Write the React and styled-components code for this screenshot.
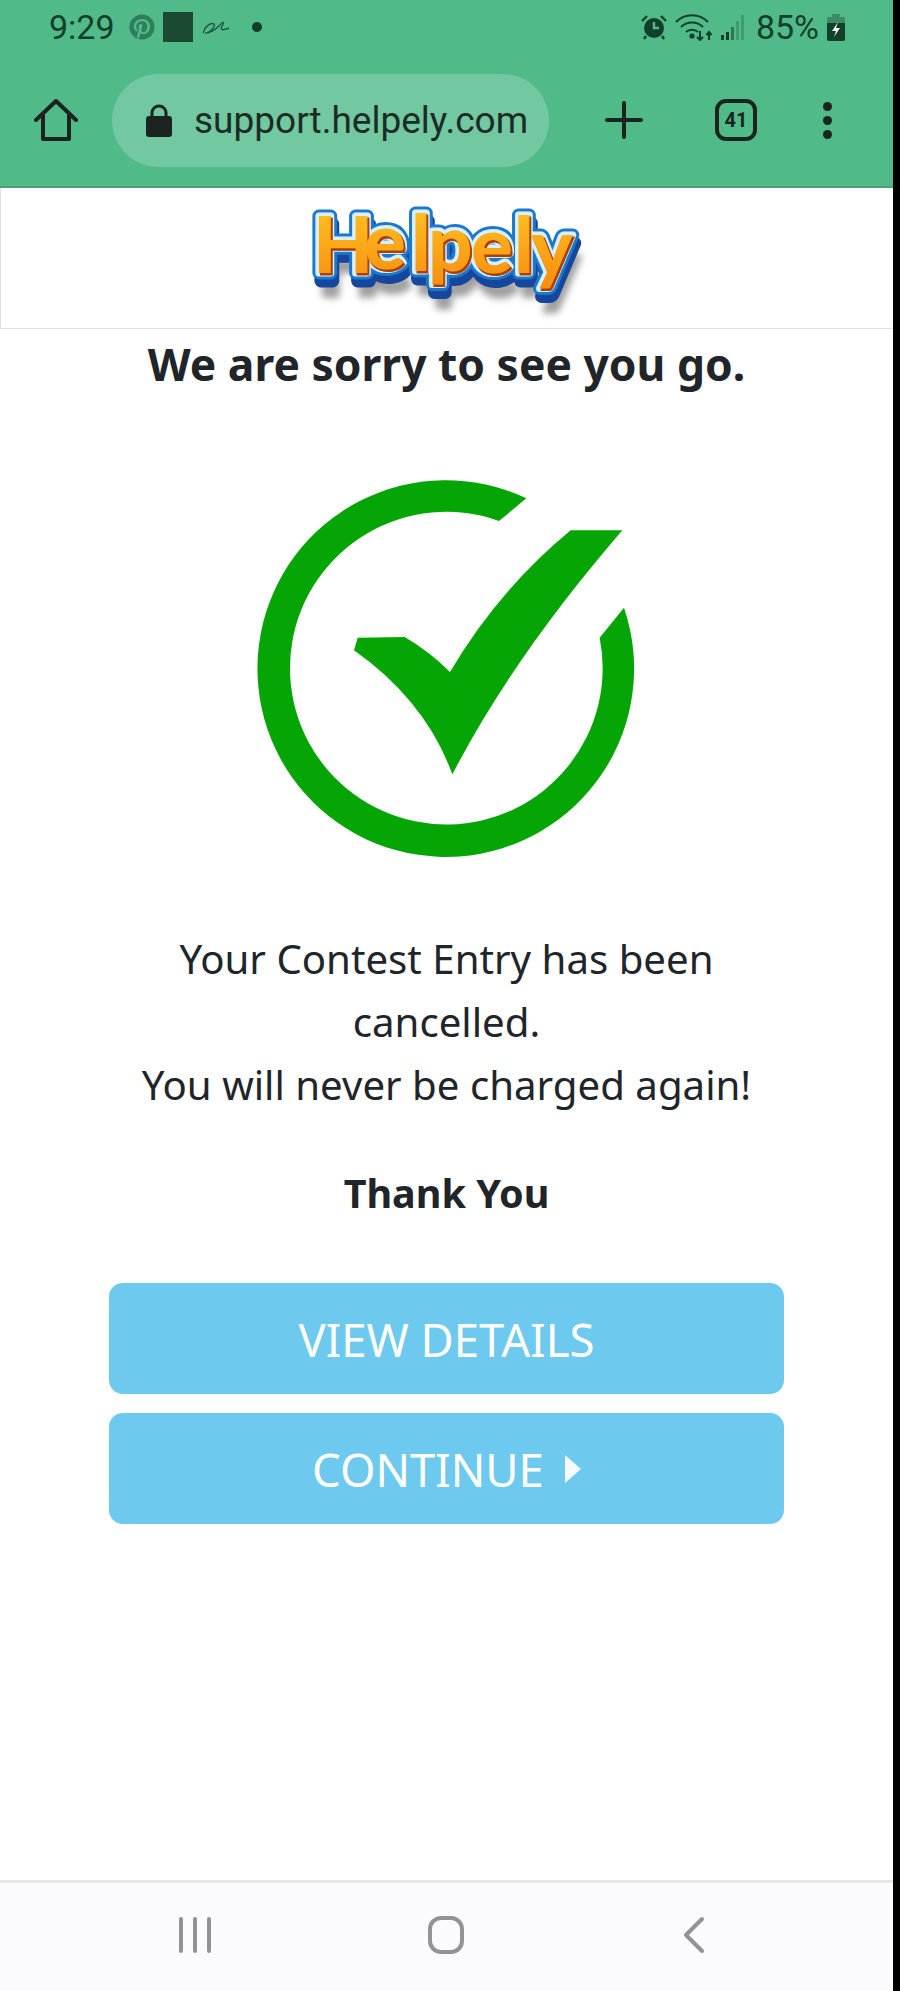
import React from 'react'
import styled, { createGlobalStyle } from 'styled-components'
import { FaPinterest } from 'react-icons/fa'

const GlobalStyle = createGlobalStyle`
    html, body {
        margin: 0;
        padding: 0;
        background: #000;
    }
    * { box-sizing: border-box; }
`

const Logo = () => (
    <LogoSvg viewBox="0 -12 290 137" role="img" aria-label="Helpely">
        <defs>
            <linearGradient id="logoFill" x1="0" y1="0" x2="0" y2="1">
                <stop offset="0" stopColor="#ffcb22" />
                <stop offset="1" stopColor="#f88a10" />
            </linearGradient>
            <filter id="logoBlur"><feGaussianBlur stdDeviation="3.5" /></filter>
        </defs>
        {/* the layers under the word all reuse the one text below */}
        <use href="#logoWord" transform="translate(6 22)" fill="#777" stroke="#777" strokeWidth="6" filter="url(#logoBlur)" opacity="0.7" />
        <use href="#logoWord" transform="translate(2 8)" fill="#17479c" stroke="#17479c" strokeWidth="13" />
        <use href="#logoWord" fill="#1c78cc" stroke="#1c78cc" strokeWidth="13" />
        <use href="#logoWord" fill="#d8f0fc" stroke="#d8f0fc" strokeWidth="7" />
        <use href="#logoWord" transform="translate(1.5 1.5)" fill="#a8410c" stroke="#a8410c" strokeWidth="1" />
        <g fill="url(#logoFill)">
            <LogoText id="logoWord" x="6 57 104 121 164 207 224" y="70 66 68 68 70 70 72">Helpely</LogoText>
        </g>
    </LogoSvg>
)

const CheckMark = () => (
    <CheckSvg viewBox="0 0 1260 1230">
        <path fill="#06a506" d="M862 112 A565 565 0 1 0 1155 440 L1082 530 A469 469 0 1 1 780 180 Z" />
        <path fill="#06a506" d="M356 530 L497 528 Q570 570 633 633 Q780 385 995 208 L1150 208 C960 430 780 670 640 940 Q560 720 345 568 Z" />
    </CheckSvg>
)

const App = () => {
    return (
        <Wrapper>
            <GlobalStyle />
            <Screen>
                <BrowserChrome>
                    <StatusBar>
                        <StatusLeft>
                            <Time>9:29</Time>
                            <PinIcon><FaPinterest size={26} /></PinIcon>
                            <DarkSquare />
                            <svg width="28" height="16" viewBox="0 0 28 16" fill="none" stroke="#1d5a3e" strokeWidth="1.4">
                                <path d="M1 14 C3 7 9 3 12 5 C14 8 6 15 3 14 C7 15 14 10 18 6 C21 2 23 3 20 7 C18 11 20 12 27 9" />
                            </svg>
                            <Dot />
                        </StatusLeft>
                        <StatusRight>
                            <svg width="26" height="26" viewBox="0 0 26 26">
                                <circle cx="13" cy="14" r="10" fill="#123f2b" />
                                <path d="M13 8 V14 H18" stroke="#50ba88" strokeWidth="2.4" fill="none" />
                                <path d="M1 7 L6 2 M25 7 L20 2 M5 22 L3 25 M21 22 L23 25" stroke="#123f2b" strokeWidth="2.4" />
                            </svg>
                            <svg width="38" height="28" viewBox="0 0 38 28" fill="none" stroke="#123f2b" strokeWidth="2">
                                <path d="M1 9 C10 0 24 0 33 9" />
                                <path d="M6 14 C12 8 22 8 28 14" />
                                <path d="M11 19 C14 16 20 16 23 19" />
                                <circle cx="17" cy="23" r="1.6" fill="#123f2b" />
                                <path d="M25 18 V27 M22 24 L25 27 L28 24 M34 27 V19 M31.5 22 L34 19 L36.5 22" />
                            </svg>
                            <svg width="24" height="26" viewBox="0 0 24 26">
                                <rect x="0" y="21" width="3" height="5" fill="#123f2b" />
                                <rect x="5" y="18" width="3" height="8" fill="#123f2b" />
                                <rect x="10" y="13" width="3" height="13" fill="#123f2b" opacity="0.55" />
                                <rect x="15" y="7" width="3" height="19" fill="#123f2b" opacity="0.25" />
                                <rect x="20" y="1" width="3" height="25" fill="#123f2b" opacity="0.25" />
                            </svg>
                            <Percent>85%</Percent>
                            <svg width="18" height="27" viewBox="0 0 18 27">
                                <path d="M5 0 H13 V3 H17 Q18 3 18 5 V25 Q18 27 16 27 H2 Q0 27 0 25 V5 Q0 3 1 3 H5 Z" fill="#3f8a66" />
                                <path d="M0 9 H18 V25 Q18 27 16 27 H2 Q0 27 0 25 Z" fill="#123f2b" />
                                <path d="M11 8 L5 17 H9 L7 23 L13 14 H9 Z" fill="#eaf6f0" />
                            </svg>
                        </StatusRight>
                    </StatusBar>
                    <Toolbar>
                        <svg width="44" height="44" viewBox="0 0 44 44" fill="none" stroke="#1b2420" strokeWidth="4" strokeLinejoin="round" strokeLinecap="round">
                            <path d="M2 22 L22 3 L42 22 M9 17 V41 H35 V17" />
                        </svg>
                        <UrlPill>
                            <svg width="26" height="34" viewBox="0 0 26 34">
                                <path d="M6 14 V10 A7 7 0 0 1 20 10 V14" fill="none" stroke="#1b2420" strokeWidth="3" />
                                <rect x="0" y="13" width="26" height="21" rx="3" fill="#1b2420" />
                            </svg>
                            <UrlText>support.helpely.com</UrlText>
                        </UrlPill>
                        <ToolActions>
                            <svg width="38" height="38" viewBox="0 0 38 38" stroke="#1b2420" strokeWidth="4" strokeLinecap="round">
                                <path d="M19 2 V36 M2 19 H36" />
                            </svg>
                            <TabCount>41</TabCount>
                            <MenuDots><i /><i /><i /></MenuDots>
                        </ToolActions>
                    </Toolbar>
                </BrowserChrome>
                <LogoBar>
                    <Logo />
                </LogoBar>
                <Main>
                    <Heading>We are sorry to see you go.</Heading>
                    <CheckMark />
                    <Message>
                        Your Contest Entry has been<br />
                        cancelled.<br />
                        You will never be charged again!
                    </Message>
                    <ThankYou>Thank You</ThankYou>
                    <ButtonStack>
                        <ActionButton>VIEW DETAILS</ActionButton>
                        <ActionButton>CONTINUE <Caret /></ActionButton>
                    </ButtonStack>
                </Main>
                <NavBar>
                    <svg width="34" height="38" viewBox="0 0 34 38" stroke="#939396" strokeWidth="4" strokeLinecap="round">
                        <path d="M3 3 V35 M17 3 V35 M31 3 V35" />
                    </svg>
                    <NavHome width="36" height="38" viewBox="0 0 36 38" fill="none" stroke="#939396" strokeWidth="4">
                        <rect x="2" y="2" width="32" height="34" rx="11" />
                    </NavHome>
                    <svg width="22" height="38" viewBox="0 0 22 38" fill="none" stroke="#939396" strokeWidth="4" strokeLinecap="round" strokeLinejoin="round">
                        <path d="M19 3 L3 19 L19 35" />
                    </svg>
                </NavBar>
            </Screen>
        </Wrapper>
    )
}

export default App

const Wrapper = styled.div`
    width: 900px;
    height: 1991px;
    background: #000;
    overflow: hidden;
`

const Screen = styled.div`
    width: 893px;
    height: 1991px;
    background: #fff;
    display: flex;
    flex-direction: column;
    font-family: "Noto Sans", sans-serif;
`

const BrowserChrome = styled.div`
    height: 188px;
    background: #50ba88;
    border-bottom: 2px solid #4aa27a;
    flex-shrink: 0;
`

const StatusBar = styled.div`
    height: 54px;
    padding: 0 48px 0 49px;
    display: flex;
    align-items: center;
    justify-content: space-between;
    color: #123f2b;
    font-family: Roboto, sans-serif;
`

const StatusLeft = styled.div`
    display: flex;
    align-items: center;
`

const StatusRight = styled.div`
    display: flex;
    align-items: center;
    gap: 8px;
`

const Time = styled.span`
    font-size: 34px;
    margin-right: 14px;
`

const PinIcon = styled.span`
    display: flex;
    color: #2f7d5b;
    margin-right: 8px;
`

const DarkSquare = styled.span`
    width: 30px;
    height: 30px;
    background: #1a4a32;
    margin-right: 9px;
`

const Dot = styled.span`
    width: 10px;
    height: 10px;
    border-radius: 50%;
    background: #123f2b;
    margin-left: 22px;
`

const Percent = styled.span`
    font-size: 34px;
    margin-left: 3px;
`

const Toolbar = styled.div`
    height: 132px;
    padding: 0 0 0 34px;
    display: flex;
    align-items: center;
`

const UrlPill = styled.div`
    width: 437px;
    height: 93px;
    margin-left: 34px;
    padding-left: 34px;
    border-radius: 47px;
    background: #72c8a0;
    display: flex;
    align-items: center;
    gap: 22px;
`

const UrlText = styled.span`
    font-family: Roboto, sans-serif;
    font-size: 37px;
    color: #1c2b24;
    white-space: nowrap;
`

const ToolActions = styled.div`
    margin-left: 56px;
    display: flex;
    align-items: center;
    gap: 72px;
`

const TabCount = styled.div`
    width: 42px;
    height: 42px;
    border: 4px solid #1b2420;
    border-radius: 11px;
    display: flex;
    align-items: center;
    justify-content: center;
    font-family: Roboto, sans-serif;
    font-size: 20px;
    font-weight: 700;
    color: #1b2420;
`

const MenuDots = styled.div`
    display: flex;
    flex-direction: column;
    gap: 5px;
    margin-left: -6px;
    i {
        width: 9px;
        height: 9px;
        border-radius: 50%;
        background: #1b2420;
    }
`

const LogoBar = styled.div`
    height: 141px;
    flex-shrink: 0;
    border: 1px solid #e2e2e2;
    border-top: none;
    border-right: none;
    display: flex;
    justify-content: center;
    align-items: flex-start;
`

const LogoSvg = styled.svg`
    width: 290px;
    height: 137px;
    margin-top: 3px;
    margin-left: 10px;
`

const LogoText = styled.text`
    font-family: Lato, sans-serif;
    font-weight: 900;
    font-size: 78px;
    stroke-linejoin: round;
`

const Main = styled.main`
    flex: 1;
    display: flex;
    flex-direction: column;
    align-items: center;
    color: #212529;
`

const Heading = styled.h1`
    margin: 5px 0 0;
    font-size: 44.4px;
    line-height: 60px;
    font-weight: 700;
    text-align: center;
    white-space: nowrap;
`

const CheckSvg = styled.svg`
    width: 420px;
    height: 410px;
    margin: 67px 0 0 5px;
`

const Message = styled.p`
    margin: 56px 0 0;
    font-size: 40.2px;
    line-height: 63px;
    text-align: center;
`

const ThankYou = styled.p`
    margin: 52px 0 0;
    font-size: 39.5px;
    line-height: 50px;
    font-weight: 700;
    text-align: center;
`

const ButtonStack = styled.div`
    margin-top: 65px;
    width: 675px;
    display: flex;
    flex-direction: column;
    gap: 19px;
`

const ActionButton = styled.div`
    height: 111px;
    border-radius: 14px;
    background: #6dc9ee;
    color: #fff;
    font-size: 45.5px;
    display: flex;
    align-items: center;
    justify-content: center;
    gap: 21px;
`

const Caret = styled.span`
    width: 0;
    height: 0;
    border-left: 16px solid #f4fbfe;
    border-top: 14px solid transparent;
    border-bottom: 14px solid transparent;
`

const NavBar = styled.div`
    height: 111px;
    flex-shrink: 0;
    background: #fbfafd;
    border-top: 3px solid #e8e8e8;
    padding: 0 188px 4px 178px;
    display: flex;
    align-items: center;
    justify-content: space-between;
`

const NavHome = styled.svg`
    margin-right: 3px;
`
